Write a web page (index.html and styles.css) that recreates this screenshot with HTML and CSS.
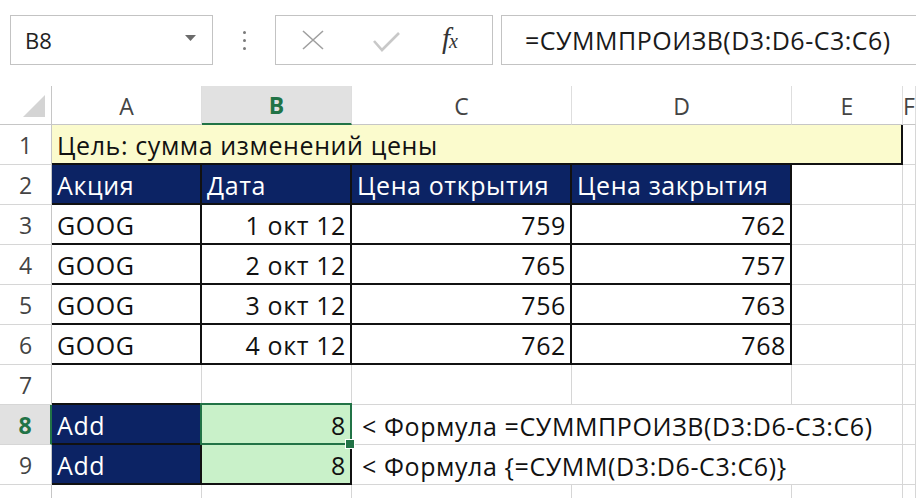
FILE: index.html
```html
<!DOCTYPE html>
<html lang="ru">
<head>
    <meta charset="UTF-8">
    <title>СУММПРОИЗВ</title>
    <link rel="stylesheet" href="styles.css">
</head>
<body>
    <div class="toolbar">
        <div class="namebox">
            <span>B8</span>
            <svg class="caret" width="11" height="6" viewBox="0 0 11 6"><path d="M0 0 H11 L5.5 6 Z" fill="#6b6b6b"/></svg>
        </div>
        <div class="grip"><i></i><i></i><i></i></div>
        <div class="fbuttons">
            <svg class="cancel" width="22" height="20" viewBox="0 0 22 20">
                <path d="M1 1 L21 19 M21 1 L1 19" stroke="#a0a0a0" stroke-width="1.6" fill="none"/>
            </svg>
            <svg class="enter" width="27" height="21" viewBox="0 0 27 21">
                <path d="M1 10 L9 19 L26 2" stroke="#c8c8c8" stroke-width="2.6" fill="none"/>
            </svg>
            <span class="fx"><i>f</i><i class="x">x</i></span>
        </div>
        <div class="formula">=СУММПРОИЗВ(D3:D6-C3:C6)</div>
    </div>

    <div class="sheet">
        <!-- column headers -->
        <div class="corner"><span class="all"></span></div>
        <div class="ch">A</div>
        <div class="ch active">B</div>
        <div class="ch">C</div>
        <div class="ch">D</div>
        <div class="ch">E</div>
        <div class="ch">F</div>

        <!-- row 1 -->
        <div class="rh">1</div>
        <div class="c yel span5">Цель: сумма изменений цены</div>
        <div class="c"></div>

        <!-- row 2 -->
        <div class="rh">2</div>
        <div class="c navy bk">Акция</div>
        <div class="c navy bk">Дата</div>
        <div class="c navy bk">Цена открытия</div>
        <div class="c navy bk">Цена закрытия</div>
        <div class="c"></div>
        <div class="c"></div>

        <!-- rows 3-6 -->
        <div class="rh">3</div>
        <div class="c bk">GOOG</div>
        <div class="c bk num">1 окт 12</div>
        <div class="c bk num">759</div>
        <div class="c bk num">762</div>
        <div class="c"></div>
        <div class="c"></div>

        <div class="rh">4</div>
        <div class="c bk">GOOG</div>
        <div class="c bk num">2 окт 12</div>
        <div class="c bk num">765</div>
        <div class="c bk num">757</div>
        <div class="c"></div>
        <div class="c"></div>

        <div class="rh">5</div>
        <div class="c bk">GOOG</div>
        <div class="c bk num">3 окт 12</div>
        <div class="c bk num">756</div>
        <div class="c bk num">763</div>
        <div class="c"></div>
        <div class="c"></div>

        <div class="rh">6</div>
        <div class="c bk">GOOG</div>
        <div class="c bk num">4 окт 12</div>
        <div class="c bk num">762</div>
        <div class="c bk num">768</div>
        <div class="c"></div>
        <div class="c"></div>

        <!-- row 7 -->
        <div class="rh">7</div>
        <div class="c bk-b"></div>
        <div class="c bk-b"></div>
        <div class="c"></div>
        <div class="c"></div>
        <div class="c"></div>
        <div class="c"></div>

        <!-- row 8 -->
        <div class="rh active">8</div>
        <div class="c navy bk">Add</div>
        <div class="c green bk num sel">8</div>
        <div class="c span3 note">&lt; Формула =СУММПРОИЗВ(D3:D6-C3:C6)</div>
        <div class="c"></div>

        <!-- row 9 -->
        <div class="rh">9</div>
        <div class="c navy bk">Add</div>
        <div class="c green bk num">8</div>
        <div class="c span3 note">&lt; Формула {=СУММ(D3:D6-C3:C6)}</div>
        <div class="c"></div>

        <!-- row 10 (only its top edge is in view) -->
        <div class="rh"></div>
        <div class="c"></div>
        <div class="c"></div>
        <div class="c"></div>
        <div class="c"></div>
        <div class="c"></div>
        <div class="c"></div>
    </div>
</body>
</html>
```

FILE: styles.css
```css
:root {
    --grid: #d6d6d6;
    --head-line: #c6c6c6;
    --excel-green: #217346;
    --navy: #0c2364;
    --yellow: #fbfbcd;
    --light-green: #c9f1c9;
}

* {
    margin: 0;
    padding: 0;
    box-sizing: border-box;
}

body {
    font-family: 'Open Sans', 'Noto Sans', sans-serif;
    background: #fff;
    color: #111;
    width: 916px;
    height: 498px;
    overflow: hidden;
}

/* Formula bar */
.toolbar {
    height: 86px;
    display: flex;
    align-items: flex-start;
    padding: 15px 0 0 10px;
}

.namebox {
    width: 203px;
    height: 50px;
    border: 1px solid #c3c3c3;
    display: flex;
    align-items: center;
    justify-content: space-between;
    padding: 0 16px 0 14px;
    font-size: 22px;
    color: #222;
}

.namebox .caret {
    margin-top: -4px;
}

.grip {
    width: 62px;
    height: 50px;
    display: flex;
    flex-direction: column;
    align-items: center;
    justify-content: center;
    gap: 5px;
}

.grip i {
    width: 3px;
    height: 3px;
    border-radius: 50%;
    background: #7a7a7a;
}

.fbuttons {
    width: 218px;
    height: 50px;
    border: 1px solid #c3c3c3;
    display: flex;
    align-items: center;
    padding-left: 26px;
}

.fbuttons .cancel {
    margin-right: 49px;
}

.fbuttons .enter {
    margin-right: 42px;
    margin-top: 2px;
}

.fx {
    font-family: 'Liberation Serif', serif;
    color: #333;
    font-size: 29px;
    line-height: 1;
    margin-top: -4px;
}

.fx .x {
    font-size: 20px;
    margin-left: -1px;
}

.formula {
    flex: 1;
    height: 50px;
    margin-left: 8px;
    margin-right: -20px;
    border: 1px solid #c3c3c3;
    display: flex;
    align-items: center;
    padding-left: 23px;
    font-size: 25px;
    letter-spacing: 0.5px;
    color: #1a1a1a;
    white-space: nowrap;
}

/* Sheet grid */
.sheet {
    display: grid;
    grid-template-columns: 52px 150px 150px 220px 220px 111px 1fr;
    grid-template-rows: 39px repeat(10, 40px);
    font-size: 25px;
    letter-spacing: 0.6px;
}

.corner,
.ch,
.rh {
    color: #444;
    background: #fff;
    font-size: 23px;
    letter-spacing: 0;
    display: flex;
    align-items: center;
    justify-content: center;
    border-right: 1px solid var(--head-line);
    border-bottom: 1px solid var(--head-line);
}

.ch {
    border-right-color: #dedede;
    padding-top: 1px;
}

.corner {
    align-items: flex-end;
    justify-content: flex-end;
    padding: 0 6px 7px 0;
}

.corner .all {
    width: 0;
    height: 0;
    border-left: 22px solid transparent;
    border-bottom: 22px solid #d4d4d4;
}

.ch.active {
    background: #e1e1e1;
    color: var(--excel-green);
    font-weight: 700;
    border-bottom: 2px solid var(--excel-green);
}

.rh {
    border-bottom-color: var(--grid);
}

.rh.active {
    background: #e1e1e1;
    color: var(--excel-green);
    font-weight: 700;
    border-right: 2px solid var(--excel-green);
}

.c {
    display: flex;
    align-items: flex-end;
    padding: 0 4px 3px 5px;
    line-height: 30px;
    white-space: nowrap;
    border-right: 1px solid var(--grid);
    border-bottom: 1px solid var(--grid);
}

.num {
    justify-content: flex-end;
}

.span5 {
    grid-column: span 5;
}

.span3 {
    grid-column: span 3;
}

.yel {
    background: var(--yellow);
    border-right: 2px solid #111;
    border-bottom: 2px solid #111;
}

.navy {
    background: var(--navy);
    color: #fff;
}

.green {
    background: var(--light-green);
}

.bk {
    border-right: 2px solid #111;
    border-bottom: 2px solid #111;
}

.bk-b {
    border-bottom: 2px solid #111;
}

.note {
    padding-left: 10px;
}

/* active cell outline + fill handle */
.sel {
    position: relative;
}

.sel::after {
    content: "";
    position: absolute;
    left: -2px;
    top: -2px;
    right: -2px;
    bottom: -2px;
    border: 2px solid var(--excel-green);
}

.sel::before {
    content: "";
    position: absolute;
    right: -5px;
    bottom: -6px;
    width: 8px;
    height: 8px;
    background: var(--excel-green);
    border: 1px solid #fff;
    z-index: 2;
}
```
